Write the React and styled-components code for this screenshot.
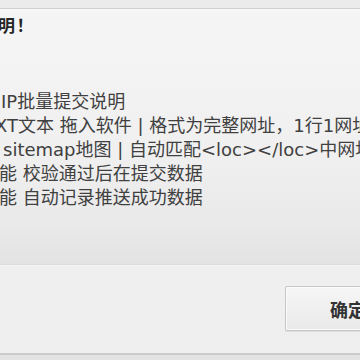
import styled, { createGlobalStyle } from 'styled-components'

const GlobalStyle = createGlobalStyle`
  *, *::before, *::after {
    box-sizing: border-box;
  }
  html, body {
    margin: 0;
    padding: 0;
    background: #e6e6e6;
  }
`

const Dialog = styled.div`
  width: 360px;
  height: 360px;
  overflow: hidden;
  display: flex;
  flex-direction: column;
  font-family: "DejaVu Sans", "Noto Sans CJK SC", sans-serif;
  color: #404040;
`

const TopStrip = styled.div`
  height: 9px;
  flex-shrink: 0;
  background: #ebebeb;
  border-bottom: 1px solid #cfcfcf;
`

const Body = styled.div`
  flex: 1;
  background: linear-gradient(#f5f5f5 0%, #f0f0f0 55%, #e9e9e9 85%, #e3e3e3 100%);
  border-top: 1px solid #fafafa;
  border-bottom: 1px solid #dcdcdc;
  padding-top: 4px;
`

const Title = styled.div`
  font-size: 17px;
  font-weight: bold;
  line-height: 24px;
  color: #262626;
  margin-left: -2px;
  letter-spacing: 1.5px;
`

const Lines = styled.div`
  margin-top: 52px;
  display: flex;
  flex-direction: column;
`

const Line = styled.div`
  font-size: 18px;
  line-height: 24px;
  white-space: nowrap;
  margin-left: ${(p) => p.$indent}px;
`

const Footer = styled.div`
  height: 88px;
  flex-shrink: 0;
  background: #efefef;
  border-top: 1px solid #f6f6f6;
  padding: 20px 0 0 285px;
  display: flex;
  align-items: flex-start;
`

const Button = styled.button`
  flex-shrink: 0;
  width: 126px;
  height: 45px;
  border: 1px solid #c6c6c6;
  border-radius: 2px;
  background: linear-gradient(#f6f6f6, #e9e9e9);
  box-shadow: inset 0 0 0 1px #fbfbfb, 0 1px 0 #dedede;
  font-family: "Noto Sans CJK SC", sans-serif;
  font-size: 18px;
  font-weight: bold;
  color: #333;
  padding: 0;
`

const BottomEdge = styled.div`
  height: 7px;
  flex-shrink: 0;
  background: #e3e3e3;
  border-top: 2px solid #cacaca;
`

const lines = [
  { text: 'IP批量提交说明', indent: 1 },
  { text: 'XT文本 拖入软件 | 格式为完整网址，1行1网址', indent: -5 },
  { text: 'sitemap地图 | 自动匹配<loc></loc>中网址', indent: 3 },
  { text: '能 校验通过后在提交数据', indent: -1 },
  { text: '能 自动记录推送成功数据', indent: -1 },
]

const App = () => {
  return (
    <Dialog>
      <GlobalStyle />
      <TopStrip />
      <Body>
        <Title>明！</Title>
        <Lines>
          {lines.map(({ text, indent }) => (
            <Line key={text} $indent={indent}>{text}</Line>
          ))}
        </Lines>
      </Body>
      <Footer>
        <Button>确定</Button>
      </Footer>
      <BottomEdge />
    </Dialog>
  )
}

export default App
